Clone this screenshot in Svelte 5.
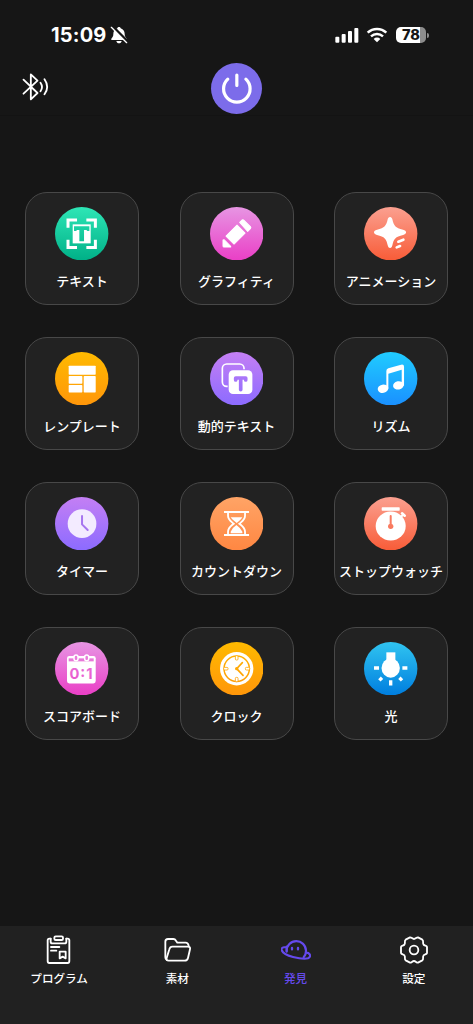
<script lang="ts">
    type Feature = { id: string; label: string; tone: string }

    const tones = [
        { id: 'mint', from: '#2ee6b6', to: '#00b087' },
        { id: 'pink', from: '#e795e3', to: '#ea3fc6' },
        { id: 'coral', from: '#fba090', to: '#f85c38' },
        { id: 'amber', from: '#ffba00', to: '#ff960a' },
        { id: 'violet', from: '#c47ff4', to: '#8c6bff' },
        { id: 'azure', from: '#20ccff', to: '#1a90ff' },
        { id: 'orange', from: '#ffa466', to: '#ff8742' },
        { id: 'ocean', from: '#30c4f0', to: '#007edf' },
    ]

    const features: Feature[] = [
        { id: 'text', label: 'テキスト', tone: 'mint' },
        { id: 'graffiti', label: 'グラフィティ', tone: 'pink' },
        { id: 'animation', label: 'アニメーション', tone: 'coral' },
        { id: 'template', label: 'レンプレート', tone: 'amber' },
        { id: 'dynamic', label: '動的テキスト', tone: 'violet' },
        { id: 'rhythm', label: 'リズム', tone: 'azure' },
        { id: 'timer', label: 'タイマー', tone: 'violet' },
        { id: 'countdown', label: 'カウントダウン', tone: 'orange' },
        { id: 'stopwatch', label: 'ストップウォッチ', tone: 'coral' },
        { id: 'score', label: 'スコアボード', tone: 'pink' },
        { id: 'clock', label: 'クロック', tone: 'amber' },
        { id: 'light', label: '光', tone: 'ocean' },
    ]

    const tabs = [
        { id: 'program', label: 'プログラム' },
        { id: 'material', label: '素材' },
        { id: 'discover', label: '発見' },
        { id: 'settings', label: '設定' },
    ]

    let activeTab = $state('discover')
</script>

<div class="screen">
    <div class="status-bar">
        <div class="status-left">
            <span class="time">15:09</span>
            <svg class="bell" viewBox="0 0 54 54" aria-hidden="true">
                <path d="M27 3c-3 0-5 2-5 4-8 3-12 9-12 17 0 8-3 10-6 14-1 3 0 4 3 4h40c3 0 4-1 3-4-3-4-6-6-6-14 0-8-4-14-12-17 0-2-2-4-5-4zM19 45h16c-1 5-4 7-8 7s-7-2-8-7z" fill="#fff" />
                <path d="M7 1l46 46" stroke="#161616" stroke-width="9" />
                <path d="M4 4l46 46" stroke="#fff" stroke-width="4" stroke-linecap="round" />
            </svg>
        </div>
        <div class="status-right">
            <svg class="signal" viewBox="0 0 72 48" fill="#fff" aria-hidden="true">
                <rect x="1" y="29" width="12" height="18" rx="3" />
                <rect x="20" y="21" width="12" height="26" rx="3" />
                <rect x="39" y="12" width="12" height="35" rx="3" />
                <rect x="58" y="3" width="12" height="44" rx="3" />
            </svg>
            <svg class="wifi" viewBox="0 0 64 48" fill="none" stroke="#fff" stroke-width="7.5" aria-hidden="true">
                <path d="M4 17a41 41 0 0 1 56 0" />
                <path d="M14 28a27 27 0 0 1 36 0" />
                <path d="M32 46l-10-10a14 14 0 0 1 20 0z" fill="#fff" stroke="none" />
            </svg>
            <div class="battery"><span class="level">78</span><span class="nub"></span></div>
        </div>
    </div>

    <header class="top-bar">
        <svg class="bluetooth" viewBox="0 0 78 84" fill="none" stroke="#fff" stroke-width="5.5" stroke-linecap="round" stroke-linejoin="round" aria-hidden="true">
            <path d="M3 20l42 40-20 19V4l20 19L3 62" />
            <path d="M54 29q9 13 0 26M66 19q16 23 0 45" />
        </svg>
        <button class="power" type="button" aria-label="電源">
            <svg viewBox="0 0 152 152" fill="none" stroke="#fff" stroke-width="9.5" stroke-linecap="round">
                <path d="M77 36v31M50 48a39.5 39.5 0 1 0 54 0" />
            </svg>
        </button>
    </header>

    <main class="grid">
        {#each features as feature (feature.id)}
            {@const tone = `url(#${feature.tone})`}
            <button class="card" type="button">
                <svg class="badge" viewBox="0 0 160 160" fill="#fff" aria-hidden="true">
                    <defs>
                        {#each tones.filter((t) => t.id === feature.tone) as t}
                            <linearGradient id={t.id} gradientUnits="userSpaceOnUse" x1="0" y1="0" x2="0" y2="160">
                                <stop offset="0" stop-color={t.from} />
                                <stop offset="1" stop-color={t.to} />
                            </linearGradient>
                        {/each}
                    </defs>
                    <circle cx="80" cy="80" r="80" fill={tone} />
                    {#if feature.id === 'text'}
                        <path d="M39 62V39h27M94 39h27v23M121 98v23H94M66 121H39V98" fill="none" stroke="#fff" stroke-width="9" />
                        <rect x="53" y="52" width="54" height="57" />
                        <path d="M57 58h46v14h-6l-3-3h-7v34h-14V69h-7l-3 3h-6z" fill={tone} />
                    {:else if feature.id === 'graffiti'}
                        <g stroke="#fff" stroke-width="3" stroke-linejoin="round">
                            <path d="M89 46l7-7q3-2 5 0l20 20q3 3 0 6l-8 8z" />
                            <path d="M81 54l24 24-33 33-24-24z" />
                            <path d="M42 98l20 20v2H42q-3 0-3-3V99z" />
                        </g>
                    {:else if feature.id === 'animation'}
                        <path d="M78 30c4 0 6 3 7 7 4 19 9 26 32 31 6 2 9 4 9 8s-3 6-9 8c-23 5-28 12-32 31-1 5-3 8-7 8s-6-3-7-8c-4-19-9-26-32-31-6-2-9-4-9-8s3-6 9-8c23-5 28-12 32-31 1-4 3-7 7-7z" />
                        <path d="M103 103l15-5M98 121l10-4" stroke={tone} stroke-width="15" stroke-linecap="round" />
                        <path d="M103 104l15-6M98 121l10-4" stroke="#fff" stroke-width="8" stroke-linecap="round" />
                    {:else if feature.id === 'template'}
                        <rect x="41" y="41" width="81" height="27" rx="2" />
                        <rect x="41" y="72" width="41" height="23" rx="2" />
                        <rect x="41" y="99" width="41" height="22" rx="2" />
                        <rect x="86" y="72" width="36" height="49" rx="2" />
                    {:else if feature.id === 'dynamic'}
                        <rect x="37" y="36" width="65" height="67" rx="13" fill="none" stroke="#fff" stroke-width="5" />
                        <rect x="53" y="52" width="76" height="77" rx="15" fill={tone} />
                        <rect x="56" y="55" width="71" height="71" rx="13" />
                        <path d="M77 84v-6h30v6M92 78v35" fill="none" stroke={tone} stroke-width="11" stroke-linecap="round" stroke-linejoin="round" />
                    {:else if feature.id === 'rhythm'}
                        <ellipse cx="57" cy="110" rx="16" ry="12.5" transform="rotate(-12 57 110)" />
                        <ellipse cx="103" cy="100" rx="16" ry="12.5" transform="rotate(-12 103 100)" />
                        <path d="M67 110V57q0-6 6-8l38-11q9-2 9 6v57h-7V53L73 65v45z" />
                    {:else if feature.id === 'timer'}
                        <circle cx="81" cy="80" r="43" fill="#f3ebff" />
                        <path d="M81 57v25l17 17" fill="none" stroke="#a675ef" stroke-width="6" stroke-linecap="round" stroke-linejoin="round" />
                    {:else if feature.id === 'countdown'}
                        <path d="M42 45h75M42 114h75" stroke="#fff" stroke-width="6" />
                        <path d="M54 46v10c0 12 9 17 17 24-8 7-17 12-17 24v10M105 46v10c0 12-9 17-17 24 8 7 17 12 17 24v10" fill="none" stroke="#fff" stroke-width="5.5" />
                        <path d="M62 61h35q-3 6-9 10l-8 7-8-7q-7-4-10-10zM79 84q14 10 18 20v5H62v-5q3-10 17-20z" />
                    {:else if feature.id === 'stopwatch'}
                        <rect x="53" y="31" width="54" height="10" rx="2" />
                        <ellipse cx="80" cy="87" rx="45" ry="43.5" />
                        <path d="M108 62l9-9" stroke="#fff" stroke-width="6" />
                        <path d="M114 49l8 7" stroke="#fff" stroke-width="8" stroke-linecap="round" />
                        <path d="M80 57v30" stroke="#f97a60" stroke-width="6" stroke-linecap="round" />
                        <circle cx="80" cy="88" r="8" fill={tone} />
                    {:else if feature.id === 'score'}
                        <rect x="36" y="42" width="86" height="82" rx="7" />
                        <path d="M41 49h75v9H41z" fill={tone} />
                        <g stroke="#fff" stroke-width="4.5" fill={tone}>
                            <rect x="57" y="39" width="12" height="17" rx="6" />
                            <rect x="89" y="39" width="12" height="17" rx="6" />
                        </g>
                        <g class="digits" fill={tone} text-anchor="middle">
                            <text x="58" y="110">0</text>
                            <text x="83" y="106">:</text>
                            <text x="103" y="110">1</text>
                        </g>
                    {:else if feature.id === 'clock'}
                        <circle cx="80" cy="80" r="50" />
                        <circle cx="80" cy="80" r="38" fill="none" stroke={tone} stroke-width="4.5" />
                        <g stroke={tone} stroke-width="2.5">
                            <rect x="76" y="41" width="8" height="13" rx="3" />
                            <rect x="76" y="106" width="8" height="13" rx="3" />
                            <rect x="41" y="76" width="13" height="8" rx="3" />
                            <rect x="106" y="76" width="13" height="8" rx="3" />
                        </g>
                        <path d="M97 62L80 80l19 20" fill="none" stroke={tone} stroke-width="5" stroke-linecap="round" />
                        <circle cx="80" cy="80" r="5" fill={tone} />
                    {:else}
                        <rect x="67" y="31" width="27" height="30" />
                        <ellipse cx="80" cy="78" rx="27.5" ry="29" />
                        <path d="M30 78h15M115 78h15M80 115v15M54 107l-8 8M106 107l8 8" stroke="#fff" stroke-width="10" />
                    {/if}
                </svg>
                <span class="card-label">{feature.label}</span>
            </button>
        {/each}
    </main>

    <nav class="tab-bar">
        {#each tabs as tab (tab.id)}
            <button class="tab" class:is-active={tab.id === activeTab} type="button" onclick={() => (activeTab = tab.id)}>
                <svg viewBox="0 0 90 90" fill="none" stroke="currentColor" stroke-width="5.5" stroke-linecap="round" stroke-linejoin="round" aria-hidden="true">
                    {#if tab.id === 'program'}
                        <path d="M20 11h-4q-5 0-5 5v62q0 6 5 6h55q5 0 5-6V16q0-5-5-5h-4" />
                        <path d="M20 11v9q0 5 5 5h37q5 0 5-5v-9" />
                        <rect x="31" y="4" width="26" height="11" rx="4" />
                        <path d="M21 36h25M21 47h16M47 50h18v20l-9-5-9 5z" />
                    {:else if tab.id === 'material'}
                        <path d="M14 75q-4-2-4-8V20q0-8 8-8h16q5 0 8 5l4 6h25q7 0 9 9" />
                        <path d="M22 43q2-8 9-8h47q8 0 6 8l-6 26q-2 8-10 8H20q-8 0-6-8z" />
                    {:else if tab.id === 'discover'}
                        <g stroke-width="6.5">
                            <path d="M17 48a29 29 0 1 1 58-1q0 12-7 20" />
                            <path d="M16 36Q1 36 2 44q2 13 34 22 31 8 45 4 9-4 5-12-3-5-11-5M17 35v15" />
                            <path d="M33 39v4M51 39v4" stroke-width="7" />
                        </g>
                    {:else}
                        <circle cx="45" cy="45" r="13" />
                        <path d="M45 12c5 0 8-6 12-5l13 7c5 3 0 10 3.6 14.5C76 33 83 31 84 36v18c-1 5-8 3-10.4 7.5C70 66 75 73 70 76l-13 7c-4 1-7-5-12-5s-8 6-12 5l-13-7c-5-3 0-10-3.6-14.5C14 57 7 59 6 54V36c1-5 8-3 10.4-7.5C20 24 15 17 20 14l13-7c4-1 7 5 12 5z" />
                    {/if}
                </svg>
                <span>{tab.label}</span>
            </button>
        {/each}
    </nav>
</div>

<style>
    :global(body) {
        margin: 0;
        background: #161616;
    }

    .screen {
        display: flex;
        flex-direction: column;
        width: 100%;
        height: 1024px;
        box-sizing: border-box;
        overflow: hidden;
        background: #161616;
        color: #fff;
        font-family: 'Noto Sans CJK JP', sans-serif;
    }

    button {
        margin: 0;
        padding: 0;
        border: none;
        background: none;
        color: inherit;
        font: inherit;
        cursor: pointer;
    }

    svg {
        display: block;
        flex-shrink: 0;
    }

    .status-bar {
        display: flex;
        justify-content: space-between;
        align-items: center;
        height: 24px;
        padding: 23px 44px 0 51px;
        font-family: Inter, sans-serif;
    }

    .status-left,
    .status-right {
        display: flex;
        align-items: center;
    }

    .time {
        font-size: 20px;
        font-weight: 700;
        line-height: 24px;
        letter-spacing: 0.2px;
    }

    .bell {
        width: 18px;
        height: 18px;
        margin-left: 3px;
    }

    .signal {
        width: 24px;
        height: 16px;
    }

    .wifi {
        width: 22px;
        height: 16px;
        margin-left: 7px;
    }

    .battery {
        display: flex;
        align-items: center;
        margin-left: 8px;
    }

    .level {
        width: 30px;
        height: 16px;
        border-radius: 5px;
        background: linear-gradient(90deg, #fff 24px, #8c8c8c 24px);
        color: #161616;
        font-size: 14.5px;
        font-weight: 800;
        line-height: 16px;
        text-align: center;
    }

    .nub {
        width: 2px;
        height: 5px;
        margin-left: 1px;
        border-radius: 0 2px 2px 0;
        background: #8c8c8c;
    }

    .top-bar {
        display: grid;
        grid-template-columns: 1fr auto 1fr;
        align-items: start;
        height: 69px;
        padding: 16px 22px 0;
        box-sizing: border-box;
        border-bottom: 1px solid #131313;
    }

    .bluetooth {
        width: 27px;
        height: 28px;
        margin-top: 10px;
    }

    .power {
        width: 51px;
        height: 51px;
        border-radius: 50%;
        background: #7c6cea;
    }

    .power svg {
        width: 100%;
        height: 100%;
    }

    .grid {
        display: grid;
        grid-template-columns: repeat(3, 114px);
        grid-auto-rows: 113px;
        row-gap: 32px;
        justify-content: space-between;
        flex: 1;
        padding: 76px 25px 0;
    }

    .card {
        display: flex;
        flex-direction: column;
        align-items: center;
        box-sizing: border-box;
        height: 113px;
        padding-top: 14px;
        border: 1px solid #484848;
        border-radius: 22px;
        background: #222;
    }

    .badge {
        width: 53.4px;
        height: 53.4px;
    }

    .digits {
        font-family: Inter, sans-serif;
        font-size: 44px;
        font-weight: 700;
    }

    .card-label {
        margin-top: 12px;
        font-size: 13px;
        font-weight: 500;
        line-height: 18px;
        white-space: nowrap;
    }

    .tab-bar {
        display: grid;
        grid-template-columns: repeat(4, 1fr);
        height: 98px;
        background: #212121;
    }

    .tab {
        display: flex;
        flex-direction: column;
        align-items: center;
        padding-top: 9px;
        font-size: 11.6px;
        font-weight: 500;
        line-height: 16px;
    }

    .tab svg {
        width: 30px;
        height: 30px;
        margin-bottom: 5px;
    }

    .tab.is-active {
        color: #654aed;
    }
</style>
